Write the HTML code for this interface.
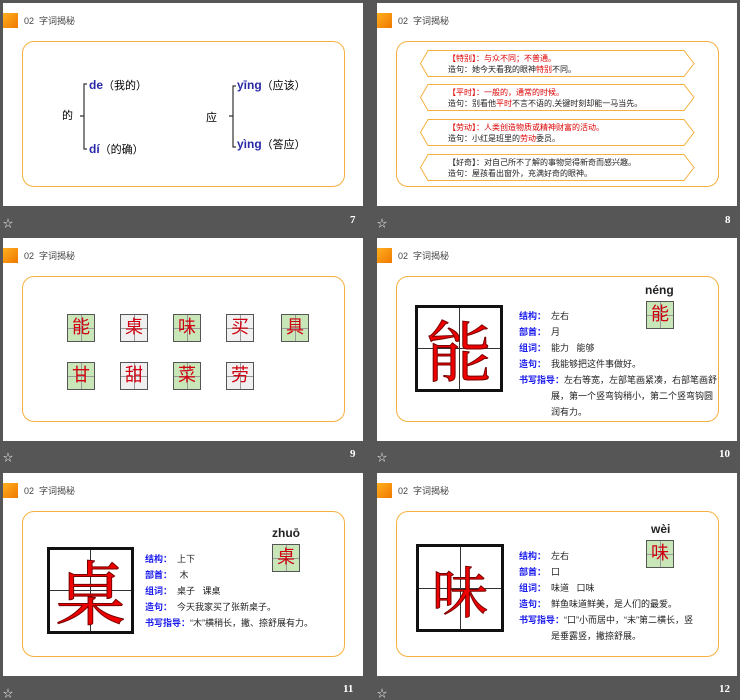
<!DOCTYPE html>
<html><head><meta charset="utf-8"><style>
*{margin:0;padding:0;box-sizing:border-box}
body{width:740px;height:696px;background:#565656;position:relative;overflow:hidden;font-family:"Liberation Sans","Noto Sans CJK SC",sans-serif}
.s{position:absolute;background:#fff;width:360px;height:203px}
.sq{position:absolute;left:0;top:10px;width:15px;height:15px;background:linear-gradient(135deg,#ffb020,#f07800)}
.hd{position:absolute;left:21px;top:11px;font-size:9px;color:#444}
.bx{position:absolute;border:1.3px solid #f5b040;border-radius:12px}
.ab{position:absolute;white-space:nowrap}
.lbl{position:absolute;color:#fff;font-size:11px;font-weight:bold;font-family:"Liberation Serif",serif}
.star{position:absolute;color:#eee;font-size:10px}
.t{position:absolute;width:28px;height:28px;border:1.5px solid #555;font-size:18px;color:#d00010;text-align:center;line-height:25px;background:linear-gradient(#999,#999) 50% 0/1px 100% no-repeat,linear-gradient(#999,#999) 0 50%/100% 1px no-repeat}
.g{background-color:#c8e6b8}.w{background-color:#f0f0f0}
.big{position:absolute;border:3px solid #111;background:linear-gradient(#333,#333) 50% 0/1px 100% no-repeat,linear-gradient(#333,#333) 0 50%/100% 1px no-repeat,#fff;color:#e00;text-align:center;font-family:"Noto Serif CJK SC",serif;-webkit-text-stroke:1px #700}
.k{color:#1a1aee;font-weight:bold}
.info{position:absolute;font-size:9px;color:#222;line-height:16px}
.py{position:absolute;font-weight:bold;font-size:12px;color:#222}
.hx{position:absolute;left:420px;width:275px;height:27px}
.hx svg{position:absolute;left:0;top:0}
.hx div{position:absolute;left:28px;top:3px;font-size:8px;line-height:11px;color:#222;white-space:nowrap}
.r{color:#d00}
.pp{font-size:12px}
</style></head><body>

<!-- slide 7 -->
<div class="s" style="left:3px;top:3px">
<div class="sq"></div><div class="hd">02&nbsp; 字词揭秘</div>
<div class="bx" style="left:19px;top:38px;width:323px;height:146px"></div>
<div class="ab" style="left:59px;top:104px;font-size:11px">的</div>
<svg class="ab" style="left:0;top:0" width="360" height="203"><g stroke="#333" stroke-width="1.2" fill="none"><path d="M84 81h-3v65h3M77 113h4M233 83h-3v61h3M226 113h4"/></g></svg>
<div class="ab" style="left:86px;top:74px;font-size:11px"><b class="pp" style="color:#2a2aa8">de</b>（我的）</div>
<div class="ab" style="left:86px;top:138px;font-size:11px"><b class="pp" style="color:#2a2aa8">dí</b>（的确）</div>
<div class="ab" style="left:203px;top:106px;font-size:11px">应</div>
<div class="ab" style="left:234px;top:74px;font-size:11px"><b class="pp" style="color:#2a2aa8">yīng</b>（应该）</div>
<div class="ab" style="left:234px;top:133px;font-size:11px"><b class="pp" style="color:#2a2aa8">yìng</b>（答应）</div>
</div>
<div class="star" style="left:3px;top:215px">☆</div><div class="lbl" style="left:350px;top:214px">7</div>

<!-- slide 8 -->
<div class="s" style="left:377px;top:3px">
<div class="sq"></div><div class="hd">02&nbsp; 字词揭秘</div>
<div class="bx" style="left:19px;top:38px;width:323px;height:146px"></div>
</div>
<div class="hx" style="top:50px"><svg width="275" height="27"><path d="M8 .5H264L274 13.5 264 26.5H8L.5 13.5Z" fill="#fff" stroke="#f5b040"/></svg><div><span class="r">【特别】：与众不同；不普通。</span><br>造句：她今天看我的眼神<span class="r">特别</span>不同。</div></div>
<div class="hx" style="top:84px"><svg width="275" height="27"><path d="M8 .5H264L274 13.5 264 26.5H8L.5 13.5Z" fill="#fff" stroke="#f5b040"/></svg><div><span class="r">【平时】：一般的，通常的时候。</span><br>造句：别看他<span class="r">平时</span>不言不语的,关键时刻却能一马当先。</div></div>
<div class="hx" style="top:119px"><svg width="275" height="27"><path d="M8 .5H264L274 13.5 264 26.5H8L.5 13.5Z" fill="#fff" stroke="#f5b040"/></svg><div><span class="r">【劳动】：人类创造物质或精神财富的活动。</span><br>造句：小红是班里的<span class="r">劳动</span>委员。</div></div>
<div class="hx" style="top:154px"><svg width="275" height="27"><path d="M8 .5H264L274 13.5 264 26.5H8L.5 13.5Z" fill="#fff" stroke="#f5b040"/></svg><div>【好奇】：对自己所不了解的事物觉得新奇而感兴趣。<br>造句：屋孩看出窗外，充满好奇的眼神。</div></div>
<div class="star" style="left:377px;top:215px">☆</div><div class="lbl" style="left:725px;top:214px">8</div>

<!-- slide 9 -->
<div class="s" style="left:3px;top:238px">
<div class="sq"></div><div class="hd">02&nbsp; 字词揭秘</div>
<div class="bx" style="left:19px;top:38px;width:323px;height:146px"></div>
</div>
<div class="t g" style="left:67px;top:314px">能</div><div class="t w" style="left:120px;top:314px">桌</div><div class="t g" style="left:173px;top:314px">味</div><div class="t w" style="left:226px;top:314px">买</div><div class="t g" style="left:281px;top:314px">具</div>
<div class="t g" style="left:67px;top:362px">甘</div><div class="t w" style="left:120px;top:362px">甜</div><div class="t g" style="left:173px;top:362px">菜</div><div class="t w" style="left:226px;top:362px">劳</div>
<div class="star" style="left:3px;top:449px">☆</div><div class="lbl" style="left:350px;top:448px">9</div>

<!-- slide 10 -->
<div class="s" style="left:377px;top:238px">
<div class="sq"></div><div class="hd">02&nbsp; 字词揭秘</div>
<div class="bx" style="left:19px;top:38px;width:323px;height:146px"></div>
</div>
<div class="big" style="left:415px;top:305px;width:88px;height:87px;font-size:66px;line-height:80px">能</div>
<div class="py" style="left:645px;top:283px">néng</div>
<div class="t g" style="left:646px;top:301px">能</div>
<div class="info" style="left:519px;top:308px"><span class="k">结构：</span>&nbsp; 左右<br><span class="k">部首：</span>&nbsp; 月<br><span class="k">组词：</span>&nbsp; 能力&nbsp;&nbsp; 能够<br><span class="k">造句：</span>&nbsp; 我能够把这件事做好。<br><span class="k">书写指导：</span>左右等宽，左部笔画紧凑，右部笔画舒<br><span style="padding-left:32px">展，第一个竖弯钩稍小，第二个竖弯钩圆</span><br><span style="padding-left:32px">润有力。</span></div>
<div class="star" style="left:377px;top:449px">☆</div><div class="lbl" style="left:719px;top:448px">10</div>

<!-- slide 11 -->
<div class="s" style="left:3px;top:473px">
<div class="sq"></div><div class="hd">02&nbsp; 字词揭秘</div>
<div class="bx" style="left:19px;top:38px;width:323px;height:146px"></div>
</div>
<div class="big" style="left:47px;top:547px;width:87px;height:87px;font-size:70px;line-height:80px">桌</div>
<div class="py" style="left:272px;top:526px">zhuō</div>
<div class="t g" style="left:272px;top:544px">桌</div>
<div class="info" style="left:145px;top:551px"><span class="k">结构：</span>&nbsp; 上下<br><span class="k">部首：</span>&nbsp;&nbsp; 木<br><span class="k">组词：</span>&nbsp; 桌子&nbsp;&nbsp; 课桌<br><span class="k">造句：</span>&nbsp; 今天我家买了张新桌子。<br><span class="k">书写指导：</span>“木”横稍长，撇、捺舒展有力。</div>
<div class="star" style="left:3px;top:685px">☆</div><div class="lbl" style="left:343px;top:683px">11</div>

<!-- slide 12 -->
<div class="s" style="left:377px;top:473px">
<div class="sq"></div><div class="hd">02&nbsp; 字词揭秘</div>
<div class="bx" style="left:19px;top:38px;width:323px;height:146px"></div>
</div>
<div class="big" style="left:416px;top:544px;width:88px;height:88px;font-size:56px;line-height:86px">味</div>
<div class="py" style="left:651px;top:522px">wèi</div>
<div class="t g" style="left:646px;top:540px">味</div>
<div class="info" style="left:519px;top:548px"><span class="k">结构：</span>&nbsp; 左右<br><span class="k">部首：</span>&nbsp; 口<br><span class="k">组词：</span>&nbsp; 味道&nbsp;&nbsp; 口味<br><span class="k">造句：</span>&nbsp; 鲜鱼味道鲜美，是人们的最爱。<br><span class="k">书写指导：</span>“口”小而居中，“未”第二横长，竖<br><span style="padding-left:32px">是垂露竖，撇捺舒展。</span></div>
<div class="star" style="left:377px;top:685px">☆</div><div class="lbl" style="left:719px;top:683px">12</div>

</body></html>
